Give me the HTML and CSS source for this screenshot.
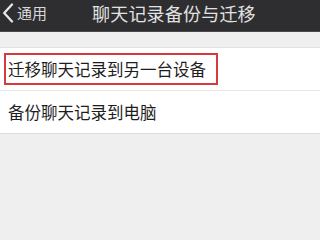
FILE: index.html
```html
<!DOCTYPE html>
<html>
  <head>
    <meta charset="UTF-8">
    <title>聊天记录备份与迁移</title>
    <link rel="stylesheet" href="styles.css">
  </head>
  <body>
    <div class="navbar">
      <a class="back" href="#">
        <svg class="chevron" width="12" height="20" viewBox="0 0 12 20">
          <path d="M10 1.5 L2.2 10 L10 18.5" fill="none" stroke="#e6e6e6" stroke-width="2.3" stroke-linecap="round" stroke-linejoin="round"/>
        </svg>
        <span>通用</span>
      </a>
      <h1 class="title">聊天记录备份与迁移</h1>
    </div>
    <div class="list">
      <div class="row">
        <span class="highlight">迁移聊天记录到另一台设备</span>
      </div>
      <div class="row">
        <span>备份聊天记录到电脑</span>
      </div>
    </div>
  </body>
</html>
```

FILE: styles.css
```css
body {
  margin: 0;
  background: #efefef;
  font-family: "Noto Sans CJK SC", "DejaVu Sans", sans-serif;
}
.navbar {
  box-sizing: border-box;
  height: 32px;
  padding-bottom: 6px;
  background: #2e2e30;
  display: flex;
  align-items: center;
  color: #e2e2e2;
  border-bottom: 1px solid #4a4a4c;
}
.back {
  flex: none;
  display: flex;
  align-items: center;
  gap: 3px;
  box-sizing: border-box;
  width: 92px;
  padding-left: 2px;
  color: #d8d8d8;
  text-decoration: none;
  font-size: 15px;
}
.title {
  margin: 0;
  font-size: 18px;
  font-weight: normal;
  letter-spacing: 0.2px;
}
.list {
  margin-top: 15px;
  background: #fff;
  border-top: 1px solid #e2e2e2;
  border-bottom: 1px solid #dcdcdc;
}
.row {
  height: 42px;
  display: flex;
  align-items: center;
  padding-left: 4px;
  font-size: 16.5px;
  color: #1e1e1e;
}
.row + .row {
  border-top: 1px solid #e6e6e6;
  padding-left: 8px;
}
.highlight {
  border: 2px solid #d8393b;
  padding: 2px 10px 2px 2px;
}
```
